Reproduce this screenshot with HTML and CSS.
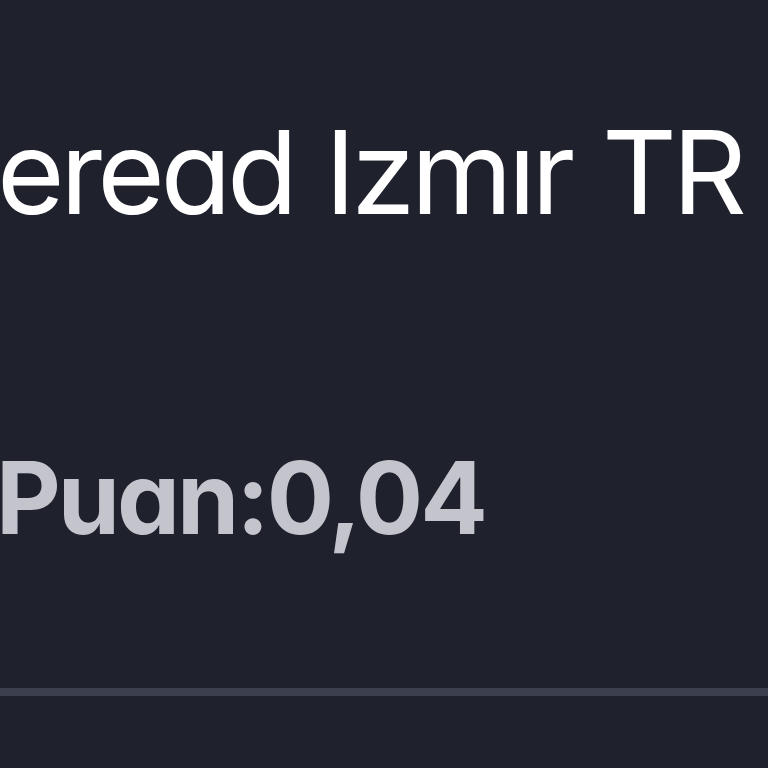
FILE: index.html
```html
<!DOCTYPE html>
<html>
<head>
<meta charset="utf-8">
<link rel="stylesheet" href="styles.css">
</head>
<body>
<div class="card">
  <div class="title">eread Izmır TR</div>
  <div class="score">Puan:0,04</div>
  <div class="divider"></div>
</div>
</body>
</html>
```
FILE: styles.css
```css
html, body {
  margin: 0;
  padding: 0;
  background: #1f222d;
  width: 768px;
  height: 768px;
  overflow: hidden;
}
.card {
  display: flex;
  flex-direction: column;
  width: 768px;
  height: 768px;
  overflow: hidden;
  font-family: Inter, "Noto Sans", sans-serif;
  font-feature-settings: "cv11" 1;
}
.title {
  white-space: nowrap;
  color: #ffffff;
  font-size: 116px;
  font-weight: 400;
  line-height: 1;
  margin-top: 114px;
  margin-left: -3px;
  letter-spacing: -4.5px;
  word-spacing: 3px;
}
.score {
  white-space: nowrap;
  color: #c4c5cc;
  font-size: 100px;
  font-weight: 700;
  line-height: 1;
  margin-top: 218px;
  margin-left: -4px;
  letter-spacing: -3px;
}
.divider {
  height: 8px;
  background: #3c3f4e;
  margin-top: 140px;
}
```
